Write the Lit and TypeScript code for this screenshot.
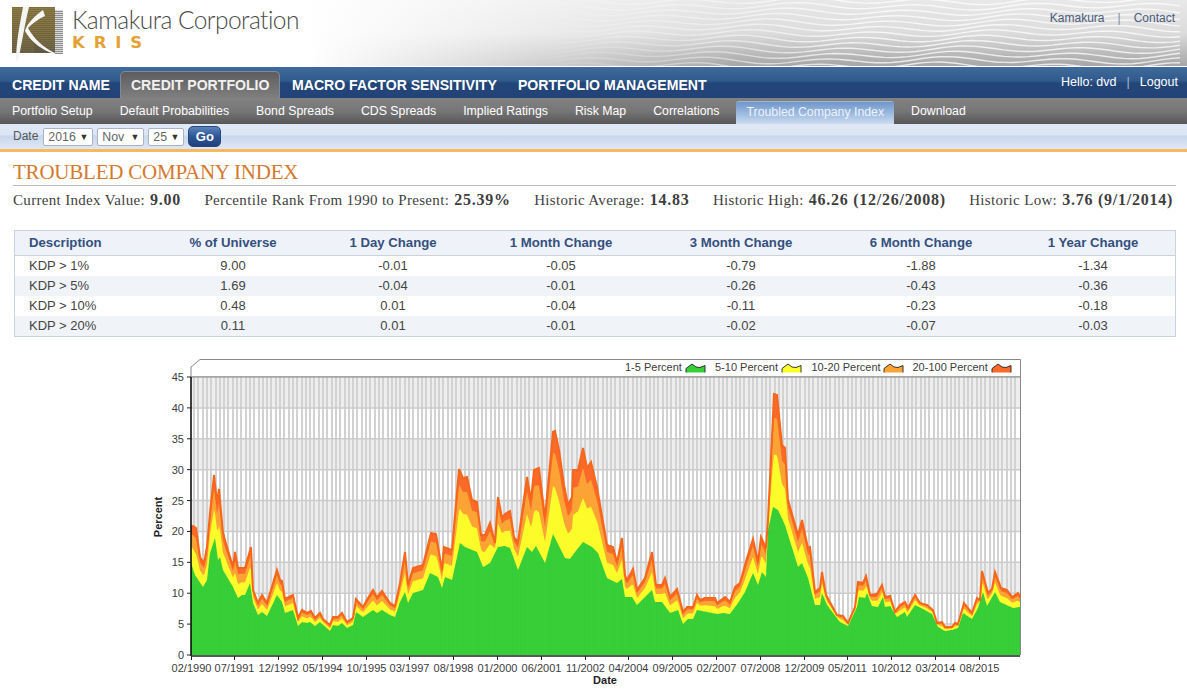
import { LitElement, html, css, svg } from "lit";
import { customElement } from "lit/decorators.js";

const RED: number[][] = [[191,527],[193,526],[196,528],[200,557],[204,563],[207,547],[210,513],[214,475],[217,503],[219,489],[223,533],[230,557],[233,567],[235,552],[238,568],[245,568],[251,547],[253,590],[258,603],[262,595],[267,603],[277,570],[280,580],[282,581],[285,599],[293,595],[298,618],[302,610],[307,613],[311,611],[315,618],[320,613],[323,619],[330,625],[333,617],[338,617],[342,613],[347,622],[353,618],[356,599],[363,607],[368,598],[373,590],[377,597],[382,591],[390,603],[395,606],[400,583],[405,552],[408,585],[413,568],[423,565],[431,533],[436,534],[442,570],[444,547],[452,550],[455,515],[459,469],[463,478],[467,477],[472,500],[477,502],[481,535],[485,535],[490,523],[495,543],[498,497],[502,518],[505,514],[510,511],[514,537],[518,542],[527,477],[531,500],[534,470],[539,468],[545,518],[553,432],[555,431],[559,450],[564,485],[568,505],[572,497],[573,470],[578,470],[583,448],[587,468],[591,462],[597,487],[607,545],[613,547],[617,562],[622,538],[625,575],[627,580],[633,569],[637,590],[645,578],[652,552],[656,585],[662,585],[665,578],[670,597],[677,589],[683,612],[687,607],[693,607],[697,595],[700,600],[705,598],[715,598],[717,603],[725,597],[730,602],[735,587],[740,583],[747,558],[753,539],[758,562],[761,537],[766,548],[768,520],[774,394],[777,395],[782,445],[785,448],[788,500],[798,535],[802,520],[808,548],[810,547],[815,592],[820,588],[822,572],[826,595],[837,615],[843,616],[848,623],[855,607],[858,582],[863,583],[866,576],[870,595],[877,594],[882,585],[885,597],[890,596],[895,612],[900,605],[905,602],[908,608],[915,595],[920,603],[927,605],[933,610],[937,623],[942,622],[945,627],[952,627],[955,623],[958,624],[964,603],[972,613],[977,598],[980,600],[982,571],[988,593],[992,589],[995,572],[1001,588],[1007,590],[1012,597],[1018,593],[1020,597]];

const GREEN: number[][] = [[191,563],[195,575],[203,587],[207,580],[210,553],[215,538],[218,560],[220,557],[223,570],[233,587],[238,598],[242,595],[245,595],[250,583],[253,603],[258,615],[262,612],[267,616],[277,595],[282,602],[285,613],[293,610],[298,626],[302,622],[307,623],[310,622],[315,626],[320,622],[330,631],[333,625],[338,626],[342,623],[347,628],[353,625],[356,612],[363,617],[373,610],[377,613],[382,610],[390,615],[395,617],[400,602],[405,592],[408,603],[413,593],[423,590],[430,573],[438,577],[442,588],[445,577],[452,580],[460,543],[465,547],[477,552],[483,567],[490,563],[498,547],[505,546],[510,548],[518,570],[527,547],[532,552],[536,546],[545,563],[553,534],[565,558],[570,559],[575,552],[583,542],[592,547],[598,553],[607,578],[617,583],[622,579],[625,597],[632,597],[637,605],[652,590],[655,602],[662,602],[670,613],[678,610],[683,624],[688,619],[693,619],[697,610],[717,614],[723,613],[730,614],[738,603],[745,592],[753,573],[758,585],[762,572],[766,577],[768,530],[773,507],[778,510],[785,525],[798,567],[802,563],[808,578],[815,605],[820,605],[822,593],[827,605],[840,622],[848,626],[857,607],[859,597],[865,598],[867,593],[872,606],[878,607],[883,597],[885,607],[890,606],[897,617],[905,612],[907,617],[915,605],[923,609],[932,614],[938,627],[945,631],[952,630],[958,628],[963,613],[972,619],[978,608],[983,592],[987,606],[995,592],[1000,602],[1013,608],[1020,607]];

function at(pts: number[][], x: number): number {
  for (let i = 1; i < pts.length; i++) {
    if (x <= pts[i][0]) {
      const [x0, y0] = pts[i - 1];
      const [x1, y1] = pts[i];
      return y0 + ((y1 - y0) * (x - x0)) / (x1 - x0);
    }
  }
  return pts[pts.length - 1][1];
}

const XS: number[] = [];
for (let x = 191; x <= 1020; x += 1) XS.push(x);

const BASE = 655;
const toPts = (fn: (x: number) => number) =>
  `191,${BASE} ` + XS.map((x) => `${x},${fn(x).toFixed(1)}`).join(" ") + ` 1020,${BASE}`;
const blend = (f: number) => (x: number) => {
  const g = at(GREEN, x);
  return g - f * (g - at(RED, x));
};

const X_TICKS: [number, string][] = [[191.5,"02/1990"],[234.5,"07/1991"],[278.5,"12/1992"],[322.5,"05/1994"],[366.5,"10/1995"],[409.5,"03/1997"],[453.5,"08/1998"],[497.5,"01/2000"],[541.5,"06/2001"],[585.5,"11/2002"],[628.5,"04/2004"],[672.5,"09/2005"],[716.5,"02/2007"],[760.5,"07/2008"],[804.5,"12/2009"],[847.5,"05/2011"],[891.5,"10/2012"],[935.5,"03/2014"],[979.5,"08/2015"]];
const Y_VALS = [0, 5, 10, 15, 20, 25, 30, 35, 40, 45];
const yOf = (v: number) => 655 - (v * 278) / 45;

const V_LINES = Array.from({ length: 192 }, (_, i) => Math.round(193 + i * 4.3));

const LEGEND: [string, number, number, string][] = [
  ["1-5 Percent", 625, 686, "#38d038"],
  ["5-10 Percent", 715, 782, "#fcfc2a"],
  ["10-20 Percent", 811.5, 884, "#fba335"],
  ["20-100 Percent", 912.5, 992, "#fb6a2a"],
];

const WAVES = Array.from({ length: 13 }, (_, i) => {
  let d = "";
  for (let x = 300; x <= 1187; x += 8) {
    const y = i * 5.4 + 1 + 2.6 * Math.sin((x + i * 9) / 19) + 1.2 * Math.sin(x / 47 + i * 0.3);
    d += `${x === 300 ? "M" : "L"}${x},${y.toFixed(1)} `;
  }
  return d;
});

@customElement("kris-chart")
class KrisChart extends LitElement {
  static styles = css`
    :host { display: block; padding-left: 150px; }
    svg { display: block; }
    text { font-family: "Liberation Sans", Arial, sans-serif; font-size: 11px; fill: #3c3c3c; }
    .axis-title { font-weight: 700; fill: #222; }
  `;
  render() {
    return html`<svg width="880" height="336" viewBox="150 355 880 336">
      <defs>
        <pattern id="gs" width="2.57" height="10" patternUnits="userSpaceOnUse" x="191">
          <rect width="1" height="10" fill="#000" fill-opacity="0.025"></rect>
        </pattern>
      </defs>
      <polygon points="191,377 191,367 200,359.5 1020.5,359.5 1020.5,377" fill="#fff" stroke="#888" stroke-width="1"></polygon>
      <rect x="191" y="377" width="829" height="278" fill="#fff"></rect>
      ${[0, 2, 4, 6, 8].map((k) => svg`<rect x="191" y=${yOf(k * 5 + 5)} width="829" height=${(278 / 45) * 5} fill="#eeeeee"></rect>`)}
      ${V_LINES.map((x) => svg`<rect x=${x} y="377" width="2" height="278" fill="#d2d2d2"></rect>`)}
      ${Y_VALS.slice(1).map((v) => svg`<line x1="191" x2="1020" y1=${yOf(v)} y2=${yOf(v)} stroke=${v === 45 ? "#888" : "#cbcbcb"} stroke-width=${v === 45 ? 1 : 1.5}></line>`)}
      <line x1="1020.5" x2="1020.5" y1="377" y2="655" stroke="#888"></line>

      <polygon points=${toPts((x) => at(RED, x))} fill="#fb6a2a"></polygon>
      <polygon points=${toPts(blend(0.79))} fill="#fba335"></polygon>
      <polygon points=${toPts(blend(0.47))} fill="#fcfc2a"></polygon>
      <polygon points=${toPts((x) => at(GREEN, x))} fill="#38d038"></polygon>
      <polygon points=${toPts((x) => at(GREEN, x))} fill="url(#gs)"></polygon>
      <polyline points=${XS.map((x) => `${x},${at(RED, x).toFixed(1)}`).join(" ")} fill="none" stroke="#f8661a" stroke-width="2"></polyline>

      <line x1="191" x2="191" y1="377" y2="656" stroke="#000" stroke-width="1.5"></line>
      <line x1="191" x2="1020" y1="656" y2="656" stroke="#222" stroke-width="1.5"></line>
      ${Y_VALS.map((v) => svg`
        <line x1="187" x2="191" y1=${yOf(v)} y2=${yOf(v)} stroke="#222"></line>
        <text x="184" y=${yOf(v) + 4} text-anchor="end">${v}</text>`)}
      ${X_TICKS.map(([x, t]) => svg`
        <line x1=${x} x2=${x} y1="656" y2="660" stroke="#222"></line>
        <text x=${x} y="672" text-anchor="middle">${t}</text>`)}
      <text class="axis-title" x="605" y="684" text-anchor="middle">Date</text>
      <text class="axis-title" x="0" y="0" text-anchor="middle" transform="translate(162 517) rotate(-90)">Percent</text>
      ${LEGEND.map(([t, tx, sx, c]) => svg`
        <text x=${tx} y="371">${t}</text>
        <path d="M${sx} 372.5 V368.5 L${sx + 6} 364 L${sx + 10} 367 L${sx + 14} 367.5 L${sx + 19} 365.5 V372.5 Z" fill=${c}></path>
        <path d="M${sx} 372.5 V368.5 L${sx + 6} 364 L${sx + 10} 367 L${sx + 14} 367.5 L${sx + 19} 365.5 V372.5" fill="none" stroke="#222" stroke-width="0.9"></path>`)}
    </svg>`;
  }
}

@customElement("app-root")
export class AppRoot extends LitElement {
  static styles = css`
    :host { display: block; width: 1187px; font-family: "Liberation Sans", Arial, sans-serif; background: #fff; }
    .header {
      position: relative; height: 66px; border-bottom: 1px solid #fff; overflow: hidden;
      background:
        linear-gradient(to right, #fff 26%, rgba(255,255,255,0) 62%),
        linear-gradient(#e8e8e8, #dcdcdc 50%, #a6a6a6);
      display: flex; justify-content: space-between; align-items: flex-start;
    }
    .waves { position: absolute; left: 0; top: 0; }
    .brand { position: relative; display: flex; padding: 7px 0 0 12px; gap: 8px; }
    .logo { display: block; }
    .brand-text { display: flex; flex-direction: column; }
    .corp { font-family: Lato, sans-serif; font-weight: 300; font-size: 24.5px; line-height: 28px; color: #4a4a4a; margin-top: -1px; white-space: nowrap; letter-spacing: -0.55px; }
    .kris { font-family: "DejaVu Sans", sans-serif; font-weight: 700; font-size: 16.5px; line-height: 15px; color: #e3a234; letter-spacing: 8.9px; margin-top: 1px; }
    .top-links { position: relative; display: flex; padding: 11px 12px 0 0; font-size: 12px; line-height: 14px; color: #4b5b7a; }
    .top-links .sep { margin: 0 13px; color: #7b8cab; }
    .nav {
      height: 31px; display: flex; justify-content: space-between;
      background: linear-gradient(#3f6b9c, #30598c 45%, #234679 52%, #224377);
      color: #fff;
    }
    .tabs { display: flex; align-items: flex-end; padding-left: 1.5px; }
    .tab { font-weight: 700; font-size: 14.1px; line-height: 26px; height: 26px; padding: 0 10.5px; }
    .tab.on {
      border-radius: 5px 5px 0 0; border: 1px solid #7d8a9b; border-bottom: 0; height: 26px; padding: 0 9.5px; margin: 0 1.5px 0 0;
      background: linear-gradient(#5d5d5d, #7f7f7f);
      color: #f1f1f1;
    }
    .user { display: flex; padding: 8px 9px 0 0; font-size: 12.5px; line-height: 14px; }
    .user .sep { margin: 0 10px; color: #a9bdd6; }
    .sub {
      height: 26px; display: flex; align-items: flex-end; padding-left: 2px;
      background: linear-gradient(#828282, #767676 50%, #575757);
    }
    .sub a { font-size: 12.3px; line-height: 20px; height: 23px; padding: 0 10px; margin-right: 7px; color: #fff; }
    .sub a.on {
      background: linear-gradient(#6f96ca, #a8c3e4 65%, #cddcf0); border-radius: 3px 3px 0 0;
      color: #eef3fb; border-top: 1px solid #9fb6d6; box-sizing: border-box;
    }
    .datebar {
      height: 25px; display: flex; align-items: center; padding-left: 13px; gap: 4px;
      background: linear-gradient(#e1e9f6 0, #dbe5f3 45%, #c7d7ed 47%, #dfe7f5 100%);
      border-bottom: 3px solid #f6b95f; font-size: 12px; color: #555;
    }
    .datebar .lbl { margin-right: 1px; margin-top: -2px; }
    .sel {
      height: 16px; border: 1px solid #aab4c4; background: #fff; border-radius: 2px; display: flex; align-items: center;
      justify-content: space-between; padding: 0 4px 0 4px; font-size: 12.3px; color: #666;
    }
    .sel i { font-style: normal; font-size: 9px; color: #333; }
    .go {
      width: 33px; height: 21px; box-sizing: border-box; border-radius: 5px; border: 1px solid #25467f; text-align: center;
      background: linear-gradient(#5d83bb, #2c5794 50%, #1f427c); color: #fff; font-weight: 700; font-size: 13px; line-height: 19px; margin-top: -1px;
    }
    .content { padding: 0 11px 0 13px; }
    h1 {
      margin: 0; font: 400 21px/24px "Liberation Serif", serif; color: #d5792d; padding-top: 8px; height: 25px;
      border-bottom: 1px solid #bbb; letter-spacing: -0.22px;
    }
    .stats {
      display: flex; justify-content: space-between; font: 400 15px/18px "Liberation Serif", serif; color: #3f3f3f; padding: 5px 3px 0 0;
      font-variant-numeric: oldstyle-nums; letter-spacing: 0.32px;
    }
    .stats b { font-weight: 700; font-size: 16px; margin-left: 1px; letter-spacing: 0.75px; }
    .tbl { margin: 21px 0 18px 1px; width: 1162px; box-sizing: border-box; border: 1px solid #ccd2db; font-size: 13px; color: #444; }
    .row { display: grid; grid-template-columns: 136px 164px 156px 180px 180px 180px 164px; height: 20px; line-height: 20px; text-align: center; }
    .row > div:first-child { text-align: left; padding-left: 14px; }
    .row.alt { background: #f0f4f9; }
    .row.head { height: 24px; line-height: 23px; background: #eff3f9; border-bottom: 1px solid #ccd2db; font-weight: 700; color: #34507f; font-size: 13.2px; }
  `;

  logo() {
    return html`<svg class="logo" width="52" height="55" viewBox="0 0 52 55">
      <defs>
        <linearGradient id="ol" x1="0" y1="0" x2="0" y2="1">
          <stop offset="0" stop-color="#8f7d47"></stop>
          <stop offset="0.6" stop-color="#807144"></stop>
          <stop offset="1" stop-color="#6f664a"></stop>
        </linearGradient>
        <pattern id="gry" width="4" height="2" patternUnits="userSpaceOnUse">
          <rect width="4" height="1" fill="#8e8e8e"></rect>
          <rect y="1" width="4" height="1" fill="#d9d9d9"></rect>
        </pattern>
        <pattern id="tex" width="3" height="2" patternUnits="userSpaceOnUse">
          <rect width="3" height="1" fill="#3a3520" fill-opacity="0.22"></rect>
        </pattern>
      </defs>
      <rect x="43" y="3" width="8" height="44" fill="url(#gry)"></rect>
      <rect x="0" y="0" width="43" height="46" fill="url(#ol)"></rect>
      <rect x="0" y="0" width="43" height="46" fill="url(#tex)"></rect>
      <path d="M22 28 C28 40 36 46 43 46 L22 46 Z" fill="#59543f" opacity="0.55"></path>
      <path d="M11 0 H17 C13 16 10 36 6 54 L4 54 C4 36 8 16 11 0 Z" fill="#f4f4f2"></path>
      <path d="M31 3 L33 9 C26 12 20 17 16 21 C22 32 32 41 43 46 L42 47 C30 43 19 35 13 24 C15 16 24 8 31 3 Z" fill="#f7f7f5"></path>
    </svg>`;
  }

  render() {
    const rows = [
      ["KDP > 1%", "9.00", "-0.01", "-0.05", "-0.79", "-1.88", "-1.34"],
      ["KDP > 5%", "1.69", "-0.04", "-0.01", "-0.26", "-0.43", "-0.36"],
      ["KDP > 10%", "0.48", "0.01", "-0.04", "-0.11", "-0.23", "-0.18"],
      ["KDP > 20%", "0.11", "0.01", "-0.01", "-0.02", "-0.07", "-0.03"],
    ];
    const heads = ["Description", "% of Universe", "1 Day Change", "1 Month Change", "3 Month Change", "6 Month Change", "1 Year Change"];
    return html`
      <div class="header">
        <svg class="waves" width="1187" height="66">
          <defs>
            <linearGradient id="wf" x1="0" x2="1" y1="0" y2="0">
              <stop offset="0.26" stop-color="#fff" stop-opacity="0"></stop>
              <stop offset="0.62" stop-color="#fff" stop-opacity="0.75"></stop>
            </linearGradient>
          </defs>
          ${WAVES.map((d) => svg`<path d=${d} fill="none" stroke="url(#wf)" stroke-width="1.4"></path>`)}
        </svg>
        <div class="brand">
          ${this.logo()}
          <div class="brand-text">
            <div class="corp">Kamakura Corporation</div>
            <div class="kris">KRIS</div>
          </div>
        </div>
        <div class="top-links"><span>Kamakura</span><span class="sep">|</span><span>Contact</span></div>
      </div>
      <div class="nav">
        <div class="tabs">
          <div class="tab">CREDIT NAME</div>
          <div class="tab on">CREDIT PORTFOLIO</div>
          <div class="tab">MACRO FACTOR SENSITIVITY</div>
          <div class="tab">PORTFOLIO MANAGEMENT</div>
        </div>
        <div class="user"><span>Hello: dvd</span><span class="sep">|</span><span>Logout</span></div>
      </div>
      <div class="sub">
        <a>Portfolio Setup</a><a>Default Probabilities</a><a>Bond Spreads</a><a>CDS Spreads</a><a>Implied Ratings</a><a>Risk Map</a><a>Correlations</a><a class="on">Troubled Company Index</a><a>Download</a>
      </div>
      <div class="datebar">
        <span class="lbl">Date</span>
        <span class="sel" style="width:40px"><span>2016</span><i>▼</i></span>
        <span class="sel" style="width:37px"><span>Nov</span><i>▼</i></span>
        <span class="sel" style="width:26px"><span>25</span><i>▼</i></span>
        <span class="go">Go</span>
      </div>
      <div class="content">
        <h1>TROUBLED COMPANY INDEX</h1>
        <div class="stats">
          <span>Current Index Value: <b>9.00</b></span>
          <span>Percentile Rank From 1990 to Present: <b>25.39%</b></span>
          <span>Historic Average: <b>14.83</b></span>
          <span>Historic High: <b>46.26 (12/26/2008)</b></span>
          <span>Historic Low: <b>3.76 (9/1/2014)</b></span>
        </div>
        <div class="tbl">
          <div class="row head">${heads.map((h) => html`<div>${h}</div>`)}</div>
          ${rows.map((r, i) => html`<div class="row ${i % 2 ? "alt" : ""}">${r.map((c) => html`<div>${c}</div>`)}</div>`)}
        </div>
      </div>
      <kris-chart></kris-chart>
    `;
  }
}
